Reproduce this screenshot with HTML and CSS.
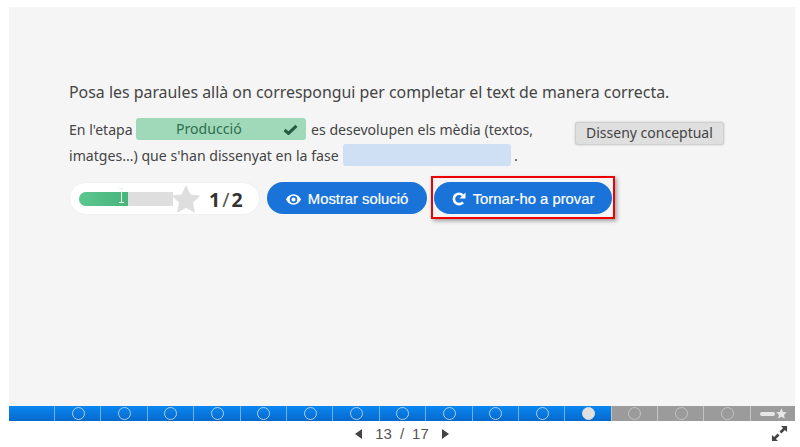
FILE: index.html
```html
<!DOCTYPE html>
<html lang="ca">
<head>
<meta charset="utf-8">
<title>Posa les paraules</title>
<link rel="stylesheet" href="styles.css">
</head>
<body>
<main class="panel">
  <p class="task">Posa les paraules allà on correspongui per completar el text de manera correcta.</p>
  <div class="exercise">
    <p class="sentence">En l'etapa <span class="drop drop-ok"><span class="drop-word">Producció</span><svg class="check" viewBox="0 0 16 12"><path d="M1.500 6.500 L5.800 10.200 L14.500 2" fill="none" stroke="currentColor" stroke-width="3.400"/></svg></span> es desevolupen els mèdia (textos, imatges...) que s'han dissenyat en la fase <span class="drop drop-empty"></span> .</p>
    <div class="word">Disseny conceptual</div>
  </div>
  <div class="actions">
    <div class="score">
      <div class="meter">
        <div class="meter-fill"></div>
        <svg class="cursor" viewBox="0 0 7 15"><path d="M1 .5H6M3.500 .5V14.500M1 14.500H6" fill="none" stroke="#e8f5ee" stroke-width="1"/></svg>
      </div>
      <svg class="star" viewBox="0 0 30 30"><path d="M15 1 L19.400 10.600 L29.400 11.800 L22 18.900 L24 29 L15 24 L6 29 L8 18.900 L.6 11.800 L10.600 10.600 Z" fill="#dedede" stroke="#dedede" stroke-width="1" stroke-linejoin="round"/></svg>
      <span class="score-text"><b>1</b><i>/</i><b>2</b></span>
    </div>
    <button class="btn btn-show">
      <svg class="btn-icon eye" viewBox="0 0 16 11"><path fill-rule="evenodd" d="M8 0C4.400 0 1.500 2.400 0 5.500 1.500 8.600 4.400 11 8 11s6.500-2.400 8-5.500C14.500 2.400 11.600 0 8 0ZM8 1.500A4 4 0 1 1 8 9.500 4 4 0 0 1 8 1.500ZM8 3.300A2.200 2.200 0 1 0 8 7.700 2.200 2.200 0 0 0 8 3.300Z" fill="#fff"/></svg>Mostrar solució
    </button>
    <div class="mark">
      <button class="btn btn-retry">
        <svg class="btn-icon redo" viewBox="0 0 14 14"><path d="M11 10.300A5.200 5.200 0 1 1 10.800 3.300" fill="none" stroke="#fff" stroke-width="2.600"/><path d="M13.500 0.500V6.500H7.500Z" fill="#fff"/></svg>Tornar-ho a provar
      </button>
    </div>
  </div>
</main>
<nav class="progress">
  <div class="seg seg-first"></div>
  <div class="seg"><span class="dot"></span></div>
  <div class="seg"><span class="dot"></span></div>
  <div class="seg"><span class="dot"></span></div>
  <div class="seg"><span class="dot"></span></div>
  <div class="seg"><span class="dot"></span></div>
  <div class="seg"><span class="dot"></span></div>
  <div class="seg"><span class="dot"></span></div>
  <div class="seg"><span class="dot"></span></div>
  <div class="seg"><span class="dot"></span></div>
  <div class="seg"><span class="dot"></span></div>
  <div class="seg"><span class="dot"></span></div>
  <div class="seg seg-current"><span class="dot dot-full"></span></div>
  <div class="seg seg-todo"><span class="dot"></span></div>
  <div class="seg seg-todo"><span class="dot"></span></div>
  <div class="seg seg-todo"><span class="dot"></span></div>
  <div class="seg seg-todo seg-last">
    <span class="mini-bar"></span>
    <svg class="mini-star" viewBox="0 0 30 30"><path d="M15 1 L19.400 10.600 L29.400 11.800 L22 18.900 L24 29 L15 24 L6 29 L8 18.900 L.6 11.800 L10.600 10.600 Z" fill="#e6e6e6"/></svg>
  </div>
</nav>
<footer class="pager">
  <div class="pager-center">
    <span class="arrow arrow-left"></span>
    <span class="count">13</span><span class="count">/</span><span class="count">17</span>
    <span class="arrow arrow-right"></span>
  </div>
  <svg class="fullscreen" viewBox="0 0 18 18"><path d="M10.500 1H17V7.500L14.700 5.200 11 9 9 7 12.800 3.300ZM7.500 17H1V10.500L3.300 12.800 7 9 9 11 5.200 14.700Z" fill="#444"/></svg>
</footer>
</body>
</html>
```
FILE: styles.css
```css
* { box-sizing: border-box; }
html, body { margin: 0; height: 447px; overflow: hidden; background: #fff; }
body { padding: 7px 5px 0 9px; font-family: "Noto Sans", "Open Sans", sans-serif; color: #444; }

.panel { height: 399px; background: #f5f5f5; padding: 73px 60px 0; }
.task { margin: 0; font-size: 15.900px; line-height: 24px; color: #444; }

.exercise { display: flex; margin-top: 13px; }
.sentence { margin: 0; width: 480px; font-size: 14.100px; line-height: 26px; color: #444; }
.drop { display: inline-flex; align-items: center; height: 22px; line-height: 20px; border-radius: 3px; vertical-align: top; margin-top: 1px; }
.drop-ok { width: 170px; background: #9fd9b9; color: #2f6e4e; margin-right: 1px; padding: 0 8px 0 0; }
.drop-word { flex: 1; text-align: center; padding-right: 2px; }
.check { width: 15px; height: 11px; color: #255c41; }
.drop-empty { width: 168px; background: #cfe0f5; margin-left: 1px; margin-right: -1px; }
.word { align-self: flex-start; margin: 5px 0 0 26px; height: 23px; padding: 0 10px; border: 1px solid #d0d0d0; border-radius: 3px; background: #dfdfdf; box-shadow: 0 0 2px #bbb; font-size: 14px; line-height: 20px; white-space: nowrap; }

.actions { display: flex; align-items: flex-start; margin-top: 7px; }
.score { display: flex; align-items: center; width: 191px; height: 33px; margin-top: 6px; padding-left: 9px; background: #fff; border-radius: 17px; border: 1px solid #f0f0f0; }
.meter { position: relative; width: 94px; height: 14px; background: #dedede; border-radius: 7px 0 0 7px; }
.meter-fill { width: 49px; height: 14px; background: linear-gradient(90deg, #5cc68f, #47b57d); border-radius: 7px 0 0 7px; }
.cursor { position: absolute; left: 39px; top: -4px; width: 7px; height: 15px; }
.star { width: 28px; height: 28px; margin-left: -1px; }
.score-text { margin-left: 9px; padding-top: 1px; font-size: 19.500px; color: #333; font-weight: 700; display: flex; gap: 2px; }
.score-text b { font-weight: 700; }
.score-text i { font-style: normal; font-weight: 400; color: #555; }

.btn { display: flex; align-items: center; justify-content: center; height: 32px; border: 0; border-radius: 16px; background: #1a73d9; color: #fff; font-family: "Liberation Sans", Arial, sans-serif; font-size: 14.800px; -webkit-text-stroke: .2px #fff; padding: 2px 0 0; }
.btn-show { width: 160px; margin: 6px 0 0 7px; }
.btn-icon { margin-right: 7px; }
.eye { width: 15px; height: 11px; }
.redo { width: 14px; height: 14px; }
.btn-retry { width: 178px; }
.mark { margin-left: 4px; padding: 4px 1px 3px 1px; border: 2px solid #e00; box-shadow: 2px 2px 4px rgba(0,0,0,.35); display: flex; height: 43px; width: 184px; }

.progress { display: flex; height: 15px; background: linear-gradient(#0a87f2, #0669cc); }
.seg { position: relative; display: flex; align-items: center; justify-content: center; width: 46.400px; flex: none; height: 15px; padding-left: 1px; border-left: 1px solid #6ab2f0; background: linear-gradient(#0a87f2, #0669cc); }
.seg-first { width: 45px; border-left: 0; }
.seg-todo { background: #9b9b9b; border-left-color: #c4c4c4; }
.seg-last { flex: 1; width: auto; gap: 1px; }
.dot { width: 13px; height: 13px; border-radius: 50%; border: 1.500px solid #b4cde6; }
.seg-todo .dot { border-color: #c4c4c4; }
.dot-full { background: #e0e0e0; border-color: #e0e0e0; }
.mini-bar { width: 15px; height: 4px; border-radius: 2px; background: #e6e6e6; }
.mini-star { width: 11px; height: 11px; }

.pager { position: relative; display: flex; justify-content: center; height: 25px; }
.pager-center { display: flex; align-items: center; height: 25px; gap: 8px; color: #555; font-family: "Liberation Sans", Arial, sans-serif; }
.count { font-size: 15px; }
.arrow { width: 0; height: 0; border-style: solid; border-color: transparent; margin: 0 5px; }
.arrow-left { border-width: 5px 7px 5px 0; border-right-color: #444; }
.arrow-right { border-width: 5px 0 5px 7px; border-left-color: #444; }
.fullscreen { position: absolute; right: 7px; top: 4px; width: 17px; height: 17px; }
```
